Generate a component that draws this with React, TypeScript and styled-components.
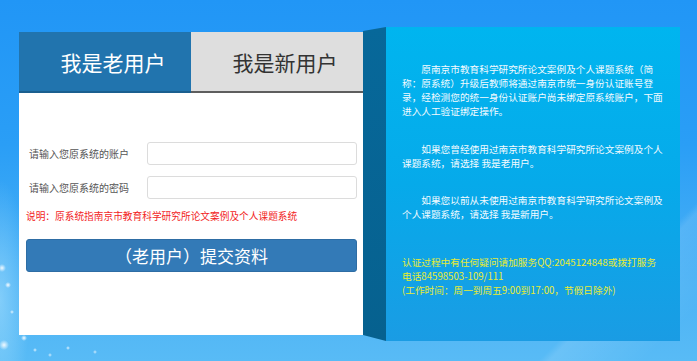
import React from "react";
import styled, { createGlobalStyle } from "styled-components";

const GlobalStyle = createGlobalStyle`
  html, body {
    margin: 0;
    padding: 0;
    width: 697px;
    height: 361px;
    overflow: hidden;
  }
  body {
    font-family: "Noto Sans CJK SC", "Noto Sans", "Liberation Sans", sans-serif;
    background:
      radial-gradient(circle at 8px 285px, rgba(255,255,255,0.95) 0, rgba(255,255,255,0) 3px),
      radial-gradient(circle at 2px 268px, rgba(255,255,255,0.9) 0, rgba(255,255,255,0) 4px),
      radial-gradient(circle at 24px 338px, rgba(255,255,255,0.95) 0, rgba(255,255,255,0) 3px),
      radial-gradient(circle at 35px 350px, rgba(255,255,255,0.8) 0, rgba(255,255,255,0) 2px),
      radial-gradient(circle at 68px 348px, rgba(255,255,255,0.8) 0, rgba(255,255,255,0) 2px),
      radial-gradient(circle at 50px 355px, rgba(255,255,255,0.7) 0, rgba(255,255,255,0) 2px),
      radial-gradient(circle at 12px 312px, rgba(255,255,255,0.8) 0, rgba(255,255,255,0) 2px),
      radial-gradient(circle at 4px 345px, rgba(255,255,255,0.9) 0, rgba(255,255,255,0) 5px),
      radial-gradient(circle at 95px 352px, rgba(255,255,255,0.7) 0, rgba(255,255,255,0) 2px),
      radial-gradient(ellipse 30px 120px at 0px 300px, rgba(180,230,255,0.5), rgba(180,230,255,0)),
      linear-gradient(135deg, rgba(255,255,255,0) 85%, rgba(255,255,255,0.12) 86%, rgba(255,255,255,0) 95%),
      linear-gradient(180deg, #2196f6 0%, #2a9ef6 40%, #4db3f5 80%, #58bbf6 100%);
  }
`;

const Page = styled.div`
  display: flex;
  align-items: flex-start;
  padding: 27px 0 0 19px;
`;

const Card = styled.div`
  margin-top: 5px;
  width: 344px;
  height: 303px;
  background: #ffffff;
  display: flex;
  flex-direction: column;
`;

const Tabs = styled.div`
  display: flex;
  height: 61px;
`;

const Tab = styled.div<{ $active?: boolean }>`
  flex: 1;
  display: flex;
  align-items: center;
  justify-content: center;
  padding-left: 16px;
  box-sizing: border-box;
  font-size: 21px;
  color: ${(p) => (p.$active ? "#ffffff" : "#333333")};
  background: ${(p) => (p.$active ? "#2174ae" : "#dedede")};
  border-bottom: 2px solid ${(p) => (p.$active ? "#1b5f8f" : "#5e5e5e")};
`;

const Form = styled.div`
  display: flex;
  flex-direction: column;
  padding: 49px 6px 0 7px;
`;

const Row = styled.div`
  display: flex;
  align-items: center;
  height: 23px;
  & + & {
    margin-top: 11px;
  }
`;

const Label = styled.label`
  width: 121px;
  padding-left: 3px;
  box-sizing: border-box;
  font-size: 10px;
  color: #555555;
`;

const Input = styled.input`
  flex: 1;
  height: 23px;
  box-sizing: border-box;
  border: 1px solid #dcdcdc;
  border-radius: 3px;
  background: #ffffff;
  outline: none;
`;

const Note = styled.div`
  margin-top: 10px;
  font-size: 9.7px;
  line-height: 14px;
  color: #f21d1d;
  white-space: nowrap;
`;

const Submit = styled.button`
  margin-top: 16px;
  height: 33px;
  border: 1px solid #2e6da4;
  border-radius: 3px;
  background: #337ab7;
  color: #ffffff;
  font-family: "Noto Sans CJK SC", "Noto Sans", sans-serif;
  font-size: 17px;
  padding: 0;
  cursor: pointer;
`;

const Side = styled.div`
  width: 23px;
  height: 314px;
  background: linear-gradient(180deg, #07689a 0%, #06618f 100%);
  clip-path: polygon(0 4px, 100% 0, 100% 100%, 0 308px);
`;

const InfoPanel = styled.div`
  width: 294px;
  height: 314px;
  box-sizing: border-box;
  padding: 35px 0 0 16px;
  background: linear-gradient(180deg, #00b5ef 0%, #06aaea 50%, #1a9ce4 100%);
`;

const Para = styled.p<{ $gap: number; $tone?: "info" | "warn" }>`
  margin: ${(p) => p.$gap}px 0 0 0;
  font-size: 9.66px;
  line-height: 14px;
  white-space: nowrap;
  color: ${(p) => (p.$tone === "warn" ? "#e8ec33" : "#f4fbff")};
`;

const Indent = styled.span`
  display: inline-block;
  width: 2em;
`;

export default function App() {
  return (
    <>
      <GlobalStyle />
      <Page>
        <Card>
          <Tabs>
            <Tab $active>我是老用户</Tab>
            <Tab>我是新用户</Tab>
          </Tabs>
          <Form>
            <Row>
              <Label>请输入您原系统的账户</Label>
              <Input type="text" />
            </Row>
            <Row>
              <Label>请输入您原系统的密码</Label>
              <Input type="password" />
            </Row>
            <Note>说明：原系统指南京市教育科学研究所论文案例及个人课题系统</Note>
            <Submit>（老用户）提交资料</Submit>
          </Form>
        </Card>
        <Side />
        <InfoPanel>
          <Para $gap={0}>
            <Indent />原南京市教育科学研究所论文案例及个人课题系统（简
            <br />称：原系统）升级后教师将通过南京市统一身份认证账号登
            <br />录，经检测您的统一身份认证账户尚未绑定原系统账户，下面
            <br />进入人工验证绑定操作。
          </Para>
          <Para $gap={24}>
            <Indent />如果您曾经使用过南京市教育科学研究所论文案例及个人
            <br />课题系统，请选择 我是老用户。
          </Para>
          <Para $gap={23}>
            <Indent />如果您以前从未使用过南京市教育科学研究所论文案例及
            <br />个人课题系统，请选择 我是新用户。
          </Para>
          <Para $gap={34} $tone="warn">
            认证过程中有任何疑问请加服务QQ:2045124848或拨打服务
            <br />电话84598503-109/111
            <br />(工作时间：周一到周五9:00到17:00，节假日除外)
          </Para>
        </InfoPanel>
      </Page>
    </>
  );
}
